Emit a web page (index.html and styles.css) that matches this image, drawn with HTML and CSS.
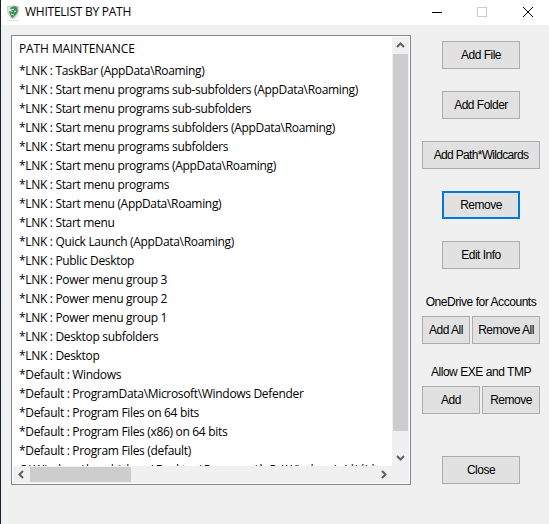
FILE: index.html
```
<!DOCTYPE html>
<html lang="en"><head><meta charset="utf-8"><title>Whitelist by Path</title><link rel="stylesheet" href="styles.css"></head>
<body>
<div class="window">
<header class="titlebar">
<svg class="logo" width="14" height="17" viewBox="0 0 14 17"><path d="M1.5 2.5Q4 3 7 1.5Q10 3 12.5 2.5L12 9Q11 13 7 15Q3 13 2 9Z" fill="#e3e6e6" stroke="#c3c9c8"/><path d="M4 4Q8 1 11 3L12 7Q10 12 6 14Q3 10 3 7L7 8L5 6Z" fill="#3d9150"/><path d="M5 6L8 5M8 8L10 7M5 10L8 11" stroke="#e6efe7"/><path d="M1 16.5H13" stroke="#dedede"/></svg>
<h1>WHITELIST BY PATH</h1>
<svg class="controls" width="104" height="12" viewBox="0 0 104 12" fill="none" shape-rendering="crispEdges"><path d="M0 6.5H10" stroke="#000"/><rect x="45.5" y="1.5" width="9" height="9" stroke="#ccc"/><path d="M91 1L101 11M101 1L91 11" stroke="#000" shape-rendering="auto"/></svg>
</header>
<main class="content">
<section class="listbox">
<div class="list">
<div class="heading">PATH MAINTENANCE</div>
<div class="row">*LNK : TaskBar (AppData\Roaming)</div>
<div class="row">*LNK : Start menu programs sub-subfolders (AppData\Roaming)</div>
<div class="row">*LNK : Start menu programs sub-subfolders</div>
<div class="row">*LNK : Start menu programs subfolders (AppData\Roaming)</div>
<div class="row">*LNK : Start menu programs subfolders</div>
<div class="row">*LNK : Start menu programs (AppData\Roaming)</div>
<div class="row">*LNK : Start menu programs</div>
<div class="row">*LNK : Start menu (AppData\Roaming)</div>
<div class="row">*LNK : Start menu</div>
<div class="row">*LNK : Quick Launch (AppData\Roaming)</div>
<div class="row">*LNK : Public Desktop</div>
<div class="row">*LNK : Power menu group 3</div>
<div class="row">*LNK : Power menu group 2</div>
<div class="row">*LNK : Power menu group 1</div>
<div class="row">*LNK : Desktop subfolders</div>
<div class="row">*LNK : Desktop</div>
<div class="row">*Default : Windows</div>
<div class="row">*Default : ProgramData\Microsoft\Windows Defender</div>
<div class="row">*Default : Program Files on 64 bits</div>
<div class="row">*Default : Program Files (x86) on 64 bits</div>
<div class="row">*Default : Program Files (default)</div>
<div class="row">C:\Windows\hendrickson\Desktop\Programs\b Ps\Windows\a\*\*\*</div>
</div>
<div class="vbar"><svg width="9" height="8" viewBox="0 0 9 8"><path d="M1 6L4.5 2.5L8 6" /></svg><div class="vthumb"></div><svg class="down" width="9" height="8" viewBox="0 0 9 8"><path d="M1 2L4.5 5.5L8 2"/></svg></div>
<div class="hbar"><svg width="8" height="9" viewBox="0 0 8 9"><path d="M6 1L2.5 4.5L6 8"/></svg><div class="hthumb"></div><svg class="right" width="8" height="9" viewBox="0 0 8 9"><path d="M2 1L5.5 4.5L2 8"/></svg></div>
<div class="corner"></div>
</section>
<aside class="actions">
<button class="medium">Add File</button>
<button class="medium">Add Folder</button>
<button class="wide">Add Path*Wildcards</button>
<button class="medium focused">Remove</button>
<button class="medium">Edit Info</button>
<div class="label onedrive">OneDrive for Accounts</div>
<div class="pair all"><button>Add All</button><button>Remove All</button></div>
<div class="label exe">Allow EXE and TMP</div>
<div class="pair"><button>Add</button><button>Remove</button></div>
<button class="medium close">Close</button>
</aside>
</main>
</div>
</body></html>
```
FILE: styles.css
```
* { box-sizing: border-box; }
body { margin: 0; overflow: hidden; }
.window { width: 549px; height: 524px; background: #f0f0f0; border-left: 1px solid #172033; font: 12px/19px "Open Sans", "Noto Sans", sans-serif; color: #000; }
.titlebar { height: 25px; background: #fff; display: flex; align-items: flex-start; padding: 3px 13px 0 5px; }
.logo { margin-top: 1px; }
h1 { font-size: 12px; font-weight: 400; line-height: 18px; margin: 0 auto 0 5px; letter-spacing: -.25px; }
.controls { margin-top: 3px; }
.content { display: flex; padding-top: 10px; }
.listbox { width: 400px; height: 450px; margin-left: 10px; border: 1px solid #828790; background: #fff; padding: 1px; display: grid; grid-template: 429px 17px / 379px 17px; }
.list { overflow: hidden; white-space: nowrap; padding-left: 6px; letter-spacing: -.32px; }
.heading { height: 24px; line-height: 23px; letter-spacing: -.1px; }
.row { height: 19px; }
.vbar, .hbar, .corner { background: #f0f0f0; }
.vbar { display: flex; flex-direction: column; align-items: center; padding: 4px 0; }
.vthumb { width: 15px; height: 377px; margin-top: 5px; background: #cdcdcd; }
.down, .right { margin: auto; }
.down { margin-bottom: 0; }
.hbar { display: flex; align-items: center; padding: 0 4px; }
.hthumb { width: 101px; height: 15px; margin-left: 5px; background: #cdcdcd; }
.right { margin-right: 0; }
.vbar path, .hbar path { fill: none; stroke: #606060; stroke-width: 2; }
.actions { width: 118px; margin-left: 11px; padding-top: 6px; display: flex; flex-direction: column; align-items: center; font: 12px/14px "Liberation Sans", sans-serif; letter-spacing: -.5px; }
button { height: 28px; margin: 0; padding: 0; border: 1px solid #adadad; background: #e1e1e1; color: #000; font: inherit; letter-spacing: inherit; white-space: nowrap; }
.medium { width: 78px; margin-bottom: 22px; }
.wide { width: 118px; margin-bottom: 22px; letter-spacing: -.68px; }
.focused { border: 2px solid #0078d7; }
.label { height: 21px; white-space: nowrap; letter-spacing: -.45px; }
.onedrive { margin-top: 4px; }
.exe { margin-top: 21px; }
.pair { display: grid; grid-template-columns: 58px 58px; gap: 2px; }
.all { grid-template-columns: 48px 68px; }
.close { margin: 42px 0 0; }
```
